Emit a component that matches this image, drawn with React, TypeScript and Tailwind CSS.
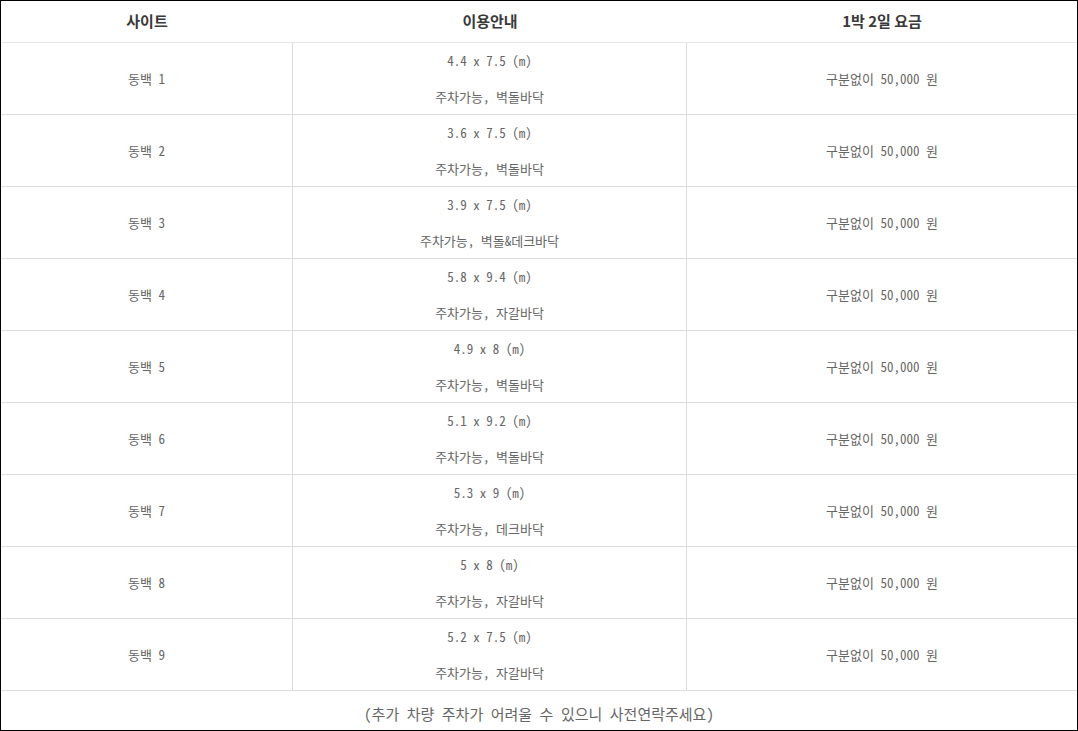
const rows = [
  { site: "동백 1", size: "4.4 x 7.5 (m)", info: "주차가능, 벽돌바닥" },
  { site: "동백 2", size: "3.6 x 7.5 (m)", info: "주차가능, 벽돌바닥" },
  { site: "동백 3", size: "3.9 x 7.5 (m)", info: "주차가능, 벽돌&데크바닥" },
  { site: "동백 4", size: "5.8 x 9.4 (m)", info: "주차가능, 자갈바닥" },
  { site: "동백 5", size: "4.9 x 8 (m)", info: "주차가능, 벽돌바닥" },
  { site: "동백 6", size: "5.1 x 9.2 (m)", info: "주차가능, 벽돌바닥" },
  { site: "동백 7", size: "5.3 x 9 (m)", info: "주차가능, 데크바닥" },
  { site: "동백 8", size: "5 x 8 (m)", info: "주차가능, 자갈바닥" },
  { site: "동백 9", size: "5.2 x 7.5 (m)", info: "주차가능, 자갈바닥" },
];

const bodyFont = {
  fontFamily: '"Noto Sans Mono CJK KR", "Liberation Mono", "Noto Sans CJK KR", monospace',
};

const App = () => {
  return (
    <div className="w-[1078px] h-[731px] border border-black bg-white overflow-hidden">
      <div
        className="grid grid-cols-[292px_394px_1fr] h-[42px] border-b border-[#e6e6e6] items-center text-center text-[15px] font-semibold text-[#3a3a3a]"
        style={{ fontFamily: '"Noto Sans CJK KR", "Noto Sans", sans-serif' }}
      >
        <div>사이트</div>
        <div>이용안내</div>
        <div>1박 2일 요금</div>
      </div>

      {rows.map((row) => (
        <div
          key={row.site}
          className="grid grid-cols-[292px_394px_1fr] h-[72px] border-b border-[#dcdcdc] text-center text-[13px] text-[#666]"
          style={bodyFont}
        >
          <div className="flex items-center justify-center border-r border-[#dcdcdc]">
            {row.site}
          </div>
          <div className="flex flex-col items-center justify-center gap-4 leading-5 border-r border-[#dcdcdc]">
            <p>{row.size}</p>
            <p>{row.info}</p>
          </div>
          <div className="flex items-center justify-center">구분없이 50,000 원</div>
        </div>
      ))}

      <div
        className="h-[39px] flex items-center justify-center pt-2 text-[15px] text-[#666]"
        style={bodyFont}
      >
        (추가 차량 주차가 어려울 수 있으니 사전연락주세요)
      </div>
    </div>
  );
};

export default App;
